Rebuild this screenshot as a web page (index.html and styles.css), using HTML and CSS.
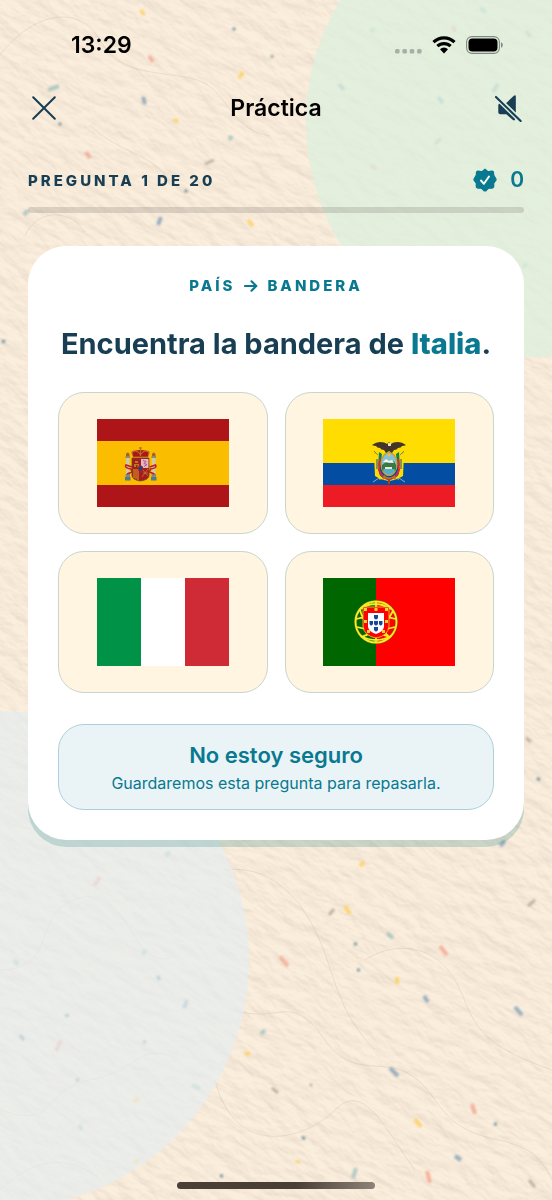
FILE: index.html
```html
<!DOCTYPE html>
<html lang="es">
<head>
<meta charset="utf-8">
<meta name="viewport" content="width=device-width, initial-scale=1">
<title>Práctica</title>
<link rel="stylesheet" href="styles.css">
</head>
<body>
<svg class="backdrop" viewBox="0 0 552 1200" preserveAspectRatio="xMidYMid slice" aria-hidden="true">
  <defs>
    <filter id="fibre" x="0" y="0" width="100%" height="100%" color-interpolation-filters="sRGB">
      <feTurbulence type="fractalNoise" baseFrequency="0.04 0.08" numOctaves="5" seed="8"/>
      <feDiffuseLighting surfaceScale="1.1" diffuseConstant="1.1" lighting-color="#fffaf2">
        <feDistantLight azimuth="260" elevation="62"/>
      </feDiffuseLighting>
    </filter>
    <filter id="soft"><feGaussianBlur stdDeviation=".8"/></filter>
  </defs>
  <rect width="552" height="1200" fill="#faeedf"/>
  <g class="fibre" transform="rotate(32 276 600)">
    <rect x="-500" y="-200" width="1550" height="1600" filter="url(#fibre)"/>
  </g>
  <g fill="none" stroke="#b9ab98" stroke-opacity=".25">
    <path d="M0 55C35 10 80 5 100 40S150 70 190 78s35 50 80 58M90 125c30 30 70 30 80 60M25 235c15-28 45-25 60-3"/>
    <path d="M225 870c40-5 70 20 90 60s20 80 60 120M235 1010c45 15 55-20 90 30s70 0 110 60 90 20 117 80M365 960c30-20 70-15 90 20s10 60 97 90M215 1080c20 80 90 60 120 30s50 20 80 60"/>
    <path d="M0 970c60 0 30-60 80-72s50 70 90 60M0 1110c60 20 40-20 90-30s50-40 90-20M0 1190c40-40 80-30 100-10"/>
  </g>
  <g stroke-width="4" opacity=".85" filter="url(#soft)">
    <path stroke="#fdd165" d="M141 10l3 5M243 72l-4 6M248 220l5 6M345 906l5 8M397 977v7M415 1119l6 8M245 1053l5 1M298 1160v3M135 1160l3 3M360 866l4-4M174 119l4 3M134 1102l5-4"/>
    <path stroke="#f3aa93" d="M149 56l4 6M86 152l4 6M280 957l8 9M440 946l7 9M472 1104l3 10M427 1171l3 12M94 886l6-9M56 1051l5-11M371 165l5 4M453 26l2 6"/>
    <path stroke="#8aa6bc" d="M143 97l2 7M161 217l-3 8M390 1068l8 8M455 1156l6 4M424 996l4 6M184 1008l3-8M515 1007l7 8M500 846l5-5M493 92l5-8M339 84l5 6M438 97l5 6"/>
    <path stroke="#a5c5c1" d="M48 90l11-4M229 140l3-4M28 210l-4 5M387 933l6 5M353 1178l3-10M82 1130l-3-5M14 960l4 5M374 28l-3 4M480 8l6 4M165 856l5-4M192 1085l8 4M261 1034l4-4M146 950l-4 5M523 267l4-3"/>
    <path stroke="#b7a995" stroke-width="3" d="M205 164l9-4M329 915l5-6M528 906l7-6M272 1088l6 5M529 1180l6 7M310 1084l2 2M526 31l5 6M435 144l6-6M526 738l5 4"/>
    <path stroke="#668896" stroke-width="3" d="M233 28l2 2M271 56l2 1M185 190l2 2M59 123l2 2M157 976l3 4M65 1016l4-1M20 1035l4 5M143 1042h3M76 1080h3M302 1137l3 2M220 1176h3M357 970h3M354 944h3M494 1124h3M537 778l3 2M2 341l3 1"/>
  </g>
  <circle cx="541" cy="122" r="235" fill="#dcf0df" fill-opacity=".74"/>
  <circle cx="0" cy="960" r="249" fill="#e4eef0" fill-opacity=".68"/>
</svg>
<div class="screen">
  <div class="statusbar">
    <time class="clock">13:29</time>
    <div class="indicators" aria-hidden="true">
      <svg class="signal" viewBox="0 0 27 5"><g fill="#8f9c94" fill-opacity=".75"><rect width="4.6" height="4.6" rx="1.5"/><rect x="7.4" width="4.6" height="4.6" rx="1.5"/><rect x="14.7" width="4.6" height="4.6" rx="1.5"/><rect x="22" width="4.6" height="4.6" rx="1.5"/></g></svg>
      <svg class="wifi" viewBox="0 0 24 18"><g fill="none" stroke="#000" stroke-width="3.2"><path d="M1.5 6.2a15 15 0 0 1 21 0"/><path d="M5.4 10.2a9.5 9.5 0 0 1 13.2 0"/></g><path d="M8 13.2a5.8 5.8 0 0 1 8 0L12 17.4z"/></svg>
      <svg class="battery" viewBox="0 0 38 18"><rect x=".6" y=".6" width="32.8" height="16.8" rx="5.4" fill="none" stroke="#7e8a83" stroke-width="1.1"/><rect x="2.5" y="2.5" width="29" height="13" rx="3.8"/><path d="M35 6.3c2.4.8 2.4 4.6 0 5.4z" fill="#7e8a83"/></svg>
    </div>
  </div>
  <header class="navbar">
    <button class="icon-button" type="button" aria-label="Cerrar"><svg class="close" viewBox="0 0 24 24"><path d="M1.2 1.2l21.6 21.6M22.8 1.2L1.2 22.8" fill="none" stroke="#173e53" stroke-width="2" stroke-linecap="round"/></svg></button>
    <h1 class="title">Práctica</h1>
    <button class="icon-button icon-button-end" type="button" aria-label="Activar sonido"><svg class="mute" viewBox="0 0 28 28"><g fill="#173e53"><path d="M21.600 1v17.500L11.500 8.500l8-7.800q1.800-1.200 2.100.3z"/><path d="M5 8.600L20.800 24v1.700q-.8 1.400-2.200.3L11.700 20H5.600Q3.400 20 3.400 17.800V11Q3.400 9 5 8.600z"/></g><path d="M1.200 2.200l25 24.500" stroke="#e1efdf" stroke-width="5"/><path d="M1 2l25.600 25" stroke="#173e53" stroke-width="2.200" stroke-linecap="round"/></svg></button>
  </header>
  <main class="content">
    <section class="progress" aria-label="Progreso">
      <div class="progress-row">
        <p class="count">PREGUNTA 1 DE 20</p>
        <p class="score"><svg class="badge" viewBox="0 0 24 24" aria-hidden="true"><path d="M12 1.200l2.700 2.300q.5.300 1.100.2l3-.6q1.500-.2 1.700 1.200l.2 2.900q.1.600.6 1l1.300 2.200q.9 1.500-.2 2.500l-1.500 2q-.3.500-.2 1.100l.1 2.300q-.1 1.700-1.700 1.800l-2.900.1q-.6 0-1 .4L13.300 22.400q-1.300 1-2.600 0L8.800 20.600q-.4-.4-1-.4l-2.900-.1q-1.600-.1-1.700-1.800l.1-2.300q.1-.6-.2-1.100l-1.500-2q-1.100-1 -.2-2.500L2.700 8.200q.5-.4.6-1l.2-2.900q.2-1.400 1.700-1.200l3 .6q.6.100 1.100-.2z" fill="#087990" stroke="#087990" stroke-width="1.200" stroke-linejoin="round"/><path d="M8 12.500l2.900 3.300 5.100-7.300" fill="none" stroke="#f2fff5" stroke-width="2" stroke-linecap="round" stroke-linejoin="round"/></svg><span>0</span></p>
      </div>
      <div class="track"></div>
    </section>
    <section class="card">
      <p class="mode">PAÍS <svg class="arrow" viewBox="0 0 14 12" role="img" aria-label="a"><path d="M1 6h11M7.5 1.300L12.300 6 7.500 10.700" fill="none" stroke="#087990" stroke-width="2.200" stroke-linecap="round" stroke-linejoin="round"/></svg> BANDERA</p>
      <h2 class="question">Encuentra la bandera de <strong>Italia</strong>.</h2>
      <div class="options">
        <button class="option" type="button" aria-label="España"><svg class="flag" viewBox="0 0 132 88">
          <path fill="#ad1519" d="M0 0h132v88H0z"/><path fill="#fabd00" d="M0 22h132v44H0z"/>
          <g><path fill="#d0c9a4" d="M29 38h3.500v20H29zM55 38h3.500v20H55z"/><path fill="#8b8b72" d="M28.500 37h4.500v2h-4.500zM54.500 37H59v2h-4.500zM28.500 55H33v3h-4.500zM54.500 55H59v3h-4.500z"/><path fill="#527b91" d="M28 58h5.500v3.500H28zM54 58h5.500v3.500H54z"/><path fill="#a8621c" d="M29 35q1.700-3 3.500 0v2H29zM55 35q1.700-3 3.500 0v2H55z"/><path d="M35 48l-6-2q-2 3 5 4l1 3-5 2M52.500 48l6-2q2 3-5 4l-1 3 5 2" fill="none" stroke="#bd202b" stroke-width="1.600"/>
          <path fill="#a51b20" stroke="#774a20" stroke-width=".8" d="M35 39h17v18q-1 4-8.500 5Q36 61 35 57z"/><path fill="#e6b7c3" d="M44 40h7.500v9H44z"/><path d="M46 41.500l3 1-2 2 3 1-3 2" stroke="#a35b8b" fill="none"/><path fill="#b07d22" d="M37 45h5v3h-1.500v-2h-1.500v2h-2zM38 42h3v2h-3z"/><path stroke="#d7a520" d="M37 50v9M39 50v10M41 50v11"/><path fill="none" stroke="#c88b28" stroke-width=".7" d="M45 50l6 7M51 50l-6 8M46 54h5"/><ellipse cx="43.500" cy="49.500" rx="2.400" ry="2.700" fill="#293d7c" stroke="#a92b2c"/>
          <path fill="#ad1519" d="M36 38l-1-4q2-3 8.500-3t8.500 3l-1 4z"/><path d="M36 38h15M36 36q-3-4 2-4 3 0 5.500 4 2.500-4 5.500-4 5 0 2 4M43.500 28v9M42 29h3" fill="none" stroke="#b66c28" stroke-width="1.200"/></g>
        </svg></button>
        <button class="option" type="button" aria-label="Ecuador"><svg class="flag" viewBox="0 0 132 88">
          <path fill="#ffdd00" d="M0 0h132v44H0z"/><path fill="#034ea2" d="M0 44h132v22H0z"/><path fill="#ed1c24" d="M0 66h132v22H0z"/>
          <g><path d="M52 33l5 28M80 33l-5 28M56 59l-6 4M76 59l6 4" stroke="#a6a49a" stroke-width="1" fill="none"/><path fill="#ffdd00" d="M51 36l5-4v23q3 5 10 6 7-1 10-6V32l5 4-1 21q-6 3-9 4l-5 1-5-1q-5-1-9-4z"/><path fill="#07825a" d="M56 33l3 2-1 8-3 5zM76 33l-3 2 1 8 3 5z"/><path d="M57 40l-1 11q2 7 10 9 8-2 10-9l-1-11" stroke="#d92b38" stroke-width="2" fill="none"/><path stroke="#194b99" d="M54 40v10M78 40v10"/>
          <ellipse cx="66" cy="45" rx="8" ry="11.500" fill="#89bfd3" stroke="#c99b2b" stroke-width="1.200"/><path fill="#367942" d="M59 46l4-3 4 1 4-2 2 4v5l-7 3-7-3z"/><path fill="#54aeca" d="M60 50h12l-2 4-4 2-4-2z"/><path fill="#f5f7ee" d="M60 43l3-3 3 2 3-1 2 3z"/><circle cx="66" cy="36" r="1.500" fill="#edc23a"/><path d="M62 48h7v2h-7z" fill="#ede8c5"/>
          <path fill="#42352b" d="M49 26q4-3 8-3 5 0 7 2l2-2 2 2q2-2 7-2 4 0 8 3-2 1-4 1-1 2-4 2-1 2-4 2l-2 3-3-2-3 2-2-3q-3 0-4-2-3 0-4-2-2 0-4-1z"/><path fill="#eee0bc" d="M65 24h3v3h-3z"/><path fill="#bb7523" d="M61 56q5 5 11 0l1 5-5-2-2 3-2-3-5 2z"/><path d="M66 60v5" stroke="#a34323" stroke-width="2"/><path fill="none" stroke="#ad7b2d" d="M51 32l4 4M81 32l-4 4"/></g>
        </svg></button>
        <button class="option" type="button" aria-label="Italia"><svg class="flag" viewBox="0 0 132 88"><path fill="#009246" d="M0 0h44v88H0z"/><path fill="#fff" d="M44 0h44v88H44z"/><path fill="#ce2b37" d="M88 0h44v88H88z"/></svg></button>
        <button class="option" type="button" aria-label="Portugal"><svg class="flag" viewBox="0 0 132 88">
          <path fill="#060" d="M0 0h53v88H0z"/><path fill="red" d="M53 0h79v88H53z"/>
          <g fill="none" stroke="#6e7314" stroke-width="2.600"><circle cx="53" cy="44" r="20.500"/></g><g fill="none" stroke="#f6ed26" stroke-width="1.800"><circle cx="53" cy="44" r="20.500"/><path d="M53 23v42M33 41q20-6 40 0M34 49q19 6 38 0M37 31q15-10 31 0M38 58q15 8 30 0M37 32q5 20 30 27M70 33q-10 19-32 26M39 29l28 31"/></g>
          <path fill="red" stroke="#f7d23c" stroke-width=".8" d="M40 29h26v19q-1 10-13 12-12-2-13-12z"/><path fill="#fff" d="M45 35h16v14q-1 5-8 7-7-2-8-7z"/><g fill="#17489c"><path d="M51 37h4v3q-2 3-4 0zM51 43h4v3q-2 3-4 0zM51 49h4v3q-2 3-4 0zM46.500 43H50v3q-2 3-3.500 0zM56 43h3.500v3q-2 3-3.500 0z"/></g><g fill="#f6d62a"><path d="M41 30h3v3h-3zM51.500 30h3v3h-3zM62 30h3v3h-3zM41 42h3v3h-3zM62 42h3v3h-3zM44 52h3v3h-3zM59 52h3v3h-3z"/></g>
        </svg></button>
      </div>
      <button class="unsure" type="button"><span class="unsure-title">No estoy seguro</span><span class="unsure-note">Guardaremos esta pregunta para repasarla.</span></button>
    </section>
  </main>
  <div class="home-indicator"></div>
</div>
</body>
</html>
```
FILE: styles.css
```css
* { box-sizing: border-box; }
body { margin: 0; background: #f8ead8; color: #173e53; font-family: Inter, "Noto Sans", sans-serif; }
h1, h2, p { margin: 0; }
button { font: inherit; color: inherit; padding: 0; cursor: pointer; }
svg { display: block; flex: none; }
.backdrop { position: fixed; inset: 0; width: 100%; height: 100%; z-index: -1; }
.fibre { mix-blend-mode: multiply; opacity: .36; }
.screen { min-height: 100vh; display: flex; flex-direction: column; }
.statusbar { display: flex; justify-content: space-between; align-items: center; padding: 32px 48px 0 71px; height: 58px; }
.clock { color: #000; font-size: 23px; line-height: 26px; font-weight: 600; }
.indicators { display: flex; align-items: center; gap: 10px; }
.signal { width: 27px; height: 5px; margin-top: 12px; }
.wifi { width: 24px; height: 18px; }
.battery { width: 38px; height: 18px; }
.navbar { display: grid; grid-template-columns: 1fr auto 1fr; align-items: center; padding: 0 28px; height: 100px; }
.icon-button { display: flex; align-items: center; width: 32px; height: 44px; padding-left: 4px; border: 0; background: none; }
.icon-button-end { justify-self: end; justify-content: flex-end; padding: 0 2px 0 0; }
.close { width: 24px; height: 24px; }
.mute { width: 27px; height: 27px; }
.title { color: #000; font-size: 23px; line-height: 28px; font-weight: 600; }
.content { padding: 8px 28px 0; }
.progress-row { display: flex; justify-content: space-between; align-items: center; height: 28px; }
.count { padding-top: 2px; font-size: 15px; line-height: 20px; font-weight: 800; letter-spacing: 3px; }
.score { display: flex; align-items: center; gap: 13px; font-size: 21px; line-height: 28px; font-weight: 600; color: #087990; }
.badge { width: 24px; height: 24px; }
.track { height: 6px; margin-top: 13px; border-radius: 3px; background: rgb(95 90 85 / 20%); }
.card { margin-top: 33px; padding: 30px; border-radius: 38px; background: #fff; box-shadow: 0 7px 0 rgb(8 121 120 / 20%); display: flex; flex-direction: column; }
.mode { display: flex; align-items: center; justify-content: center; gap: 9px; color: #087990; font-size: 15px; line-height: 20px; font-weight: 800; letter-spacing: 3px; }
.arrow { width: 14px; height: 12px; }
.question { margin-top: 30px; text-align: center; font-size: 29px; line-height: 36px; font-weight: 700; }
.question strong { color: #087990; font-weight: 800; }
.options { margin-top: 30px; display: grid; grid-template-columns: 1fr 1fr; gap: 17px; }
.option { display: flex; align-items: center; justify-content: center; height: 142px; border: 1px solid #c8d6cf; border-radius: 26px; background: #fff5e0; }
.flag { width: 132px; height: 88px; }
.unsure { margin-top: 31px; display: flex; flex-direction: column; align-items: center; gap: 4px; padding: 16px 12px; border: 1px solid #acd0db; border-radius: 26px; background: #eaf4f7; color: #087990; }
.unsure-title { font-size: 22px; line-height: 28px; font-weight: 600; }
.unsure-note { font-size: 16px; line-height: 20px; }
.home-indicator { width: 36%; height: 7px; margin: auto auto 11px; border-radius: 4px; background: linear-gradient(90deg, #493f36 60%, #8c8277); }
```
